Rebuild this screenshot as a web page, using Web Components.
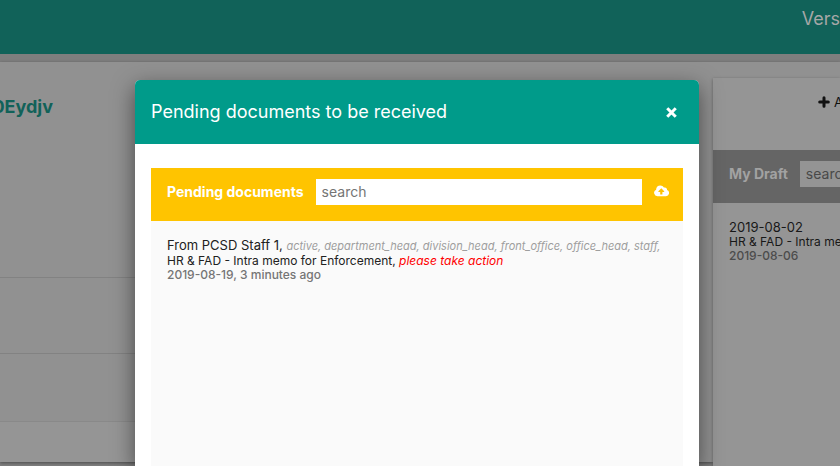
<!DOCTYPE html>
<html lang="en">
<head>
<meta charset="utf-8">
<title>Pending documents</title>
<style>
html, body { height: 100%; margin: 0; overflow: hidden; }
body { font-family: Inter, "Liberation Sans", sans-serif; color: #212121; background: #7e7e7e; }
</style>
</head>
<body>
<documents-app></documents-app>
<script>
const define = (name, html, init) => {
  const template = document.createElement('template');
  template.innerHTML = html;
  customElements.define(name, class extends HTMLElement {
    constructor() {
      super();
      this.attachShadow({ mode: 'open' }).append(template.content.cloneNode(true));
    }
    connectedCallback() { if (init) init(this, this.shadowRoot); }
  });
};

define('app-bar', `
<style>
:host { display: flex; justify-content: flex-end; height: 54px; box-sizing: border-box; background: #116259; color: #a5a7a7; padding-top: 7px; font-size: 18px; line-height: 24px; overflow: hidden; }
</style><slot></slot>`);

define('profile-panel', `
<style>
:host { display: block; overflow: hidden; }
.row { box-sizing: border-box; border-bottom: 1px solid #828282; height: 76px; margin-right: 24px; }
.head { height: 216px; padding-top: 33px; }
.short { height: 68px; border-color: #898989; }
.foot { height: 40px; background: #959595; margin-right: 24px; }
h2 { margin: 0; display: flex; justify-content: flex-end; width: 53px; font-size: 18px; line-height: 24px; font-weight: 700; color: #116259; }
</style>
<div class="row head"><h2><slot></slot></h2></div>
<div class="row"></div><div class="row short"></div><div class="foot"></div>`);

define('search-bar', `
<style>
:host { display: flex; align-items: flex-start; box-sizing: border-box; height: 53px; padding: 11px 14px 11px 16px; gap: 12px; background: var(--bar, #ffc400); color: var(--bar-text, #fff); }
label { font-size: 14px; line-height: 26px; font-weight: 700; white-space: nowrap; }
input { flex: 1; min-width: var(--field-min, 0); height: 26px; box-sizing: border-box; border: 0; border-radius: 0; padding: 0 6px; font: 14px/26px Inter, "Liberation Sans", sans-serif; background: var(--field, #fff); }
input::placeholder { color: var(--hint, #757575); }
::slotted(button) { margin-left: -2px; }
</style>
<label for="q"></label><input id="q" type="text" placeholder="search"><slot></slot>`,
(host, root) => { root.querySelector('label').textContent = host.getAttribute('label'); });

define('document-entry', `
<style>
:host { display: block; padding: 16px; font-size: 12px; white-space: nowrap; overflow: hidden; }
.from { font-size: 13px; line-height: 16px; }
.subject { line-height: 14px; }
.date { line-height: 13px; color: var(--muted, #757575); font-weight: 500; }
</style>
<div class="from"><slot name="from"></slot></div>
<div class="subject"><slot name="subject"></slot></div>
<div class="date"><slot name="date"></slot></div>`);

define('draft-panel', `
<style>
:host { display: block; background: #959595; box-shadow: 0 1px 3px #5c5c5c; overflow: hidden; --bar: #656565; --bar-text: #a2a2a2; --field: #949494; --hint: #494949; --muted: #4c4c4c; --field-min: 120px; color: #181818; }
.actions { height: 72px; box-sizing: border-box; padding: 14px 0 0 105px; }
button { all: unset; display: flex; align-items: center; gap: 4px; height: 20px; font-size: 13px; color: #111; }
svg { width: 12px; height: 12px; flex: none; }
</style>
<div class="actions"><button type="button"><svg viewBox="0 0 12 12" aria-hidden="true"><path d="M6 1.7v8.6M1.7 6h8.6" stroke="currentColor" stroke-width="3" stroke-linecap="round"/></svg>A</button></div>
<search-bar label="My Draft"></search-bar>
<document-entry><span slot="from">2019-08-02</span><span slot="subject">HR &amp; FAD - Intra memo</span><span slot="date">2019-08-06</span></document-entry>`);

define('modal-dialog', `
<style>
:host { display: flex; flex-direction: column; box-sizing: border-box; background: #fff; border-radius: 5px 5px 0 0; box-shadow: 0 7px 22px rgba(0,0,0,.5); overflow: hidden; }
header { flex: none; box-sizing: border-box; height: 64px; padding: 0 20px 0 16px; display: flex; align-items: center; justify-content: space-between; background: #009b8a; color: #fff; }
h1 { margin: 0; font-size: 18px; line-height: 24px; font-weight: 400; white-space: nowrap; }
button { all: unset; width: 16px; height: 16px; display: grid; place-items: center; }
svg { width: 11px; height: 11px; }
main { flex: 1; display: flex; flex-direction: column; padding: 24px 16px 0; }
</style>
<header><h1><slot name="title"></slot></h1><button type="button" aria-label="Close"><svg viewBox="0 0 11 11"><path d="M2.3 2.3l6.4 6.4M8.7 2.3L2.3 8.7" stroke="currentColor" stroke-width="3" stroke-linecap="square" stroke-linejoin="round"/></svg></button></header>
<main><slot></slot></main>`);

define('documents-app', `
<style>
:host { display: block; height: 100%; position: relative; overflow: hidden; }
.page { margin-top: 8px; background: #919191; box-shadow: 0 1px 3px #4e4e4e; display: grid; grid-template-columns: minmax(0, 1fr) 127px; }
draft-panel { margin-top: 16px; height: 400px; margin-bottom: -16px; }
.overlay { position: absolute; inset: 0; display: flex; padding: 80px 141px 0 135px; }
modal-dialog { flex: 1; min-width: 0; }
.list { flex: 1; background: #fafafa; }
.upload { all: unset; height: 26px; display: flex; align-items: center; }
.upload svg { width: 15px; height: 12px; margin-bottom: 2px; }
.roles { font-size: 11px; color: #9e9e9e; }
.note { color: #f00; }
</style>
<app-bar>Vers</app-bar>
<div class="page">
  <profile-panel>0Eydjv</profile-panel>
  <draft-panel></draft-panel>
</div>
<div class="overlay">
  <modal-dialog role="dialog" aria-label="Pending documents to be received">
    <span slot="title">Pending documents to be received</span>
    <search-bar label="Pending documents">
      <button class="upload" type="button" aria-label="Upload"><svg viewBox="0 0 15 12"><path fill="#fff" fill-rule="evenodd" d="M3.6 11.2A3.4 3.4 0 0 1 2.1 4.7C2.1 2 4 .5 6.3.5c1.6 0 2.9.8 3.6 2.1 1.8-.7 3.4.7 3.1 2.4A3.2 3.2 0 0 1 11.8 11.2ZM7.3 3.3L4.4 6.2V7H6.2V9.5H8.4V7H10.2V6.2Z"/></svg></button>
    </search-bar>
    <div class="list">
      <document-entry>
        <span slot="from">From PCSD Staff 1, <em class="roles">active, department_head, division_head, front_office, office_head, staff,</em></span>
        <span slot="subject">HR &amp; FAD - Intra memo for Enforcement, <em class="note">please take action</em></span>
        <span slot="date">2019-08-19, 3 minutes ago</span>
      </document-entry>
    </div>
  </modal-dialog>
</div>`);
</script>
</body>
</html>
